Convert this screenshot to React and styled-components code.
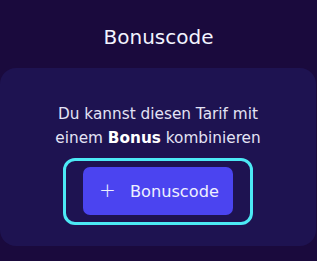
import React from "react";
import styled, { createGlobalStyle } from "styled-components";

const GlobalStyle = createGlobalStyle`
  html, body {
    margin: 0;
    padding: 0;
    background: #1a0a3d;
  }
  body {
    font-family: "DejaVu Sans", "Noto Sans", sans-serif;
  }
`;

const Page = styled.div`
  width: 317px;
  height: 261px;
  background: #1a0a3d;
  display: flex;
  flex-direction: column;
`;

const Title = styled.h2`
  margin: 0;
  height: 68px;
  display: flex;
  align-items: center;
  justify-content: center;
  padding-top: 6px;
  box-sizing: border-box;
  font-size: 20px;
  font-weight: 500;
  color: #f2f3ff;
`;

const Card = styled.div`
  width: 316px;
  height: 178px;
  box-sizing: border-box;
  background: #1e1351;
  border-radius: 16px;
  padding-top: 34px;
  display: flex;
  flex-direction: column;
  align-items: center;
`;

const Text = styled.p`
  margin: 0 0 8px;
  text-align: center;
  font-size: 15.3px;
  line-height: 24px;
  color: #e4e3f5;
  b {
    font-weight: 700;
    color: #ffffff;
  }
`;

const Ring = styled.div`
  border: 3px solid #4ce9f5;
  border-radius: 12px;
  padding: 6px 17px 7px;
`;

const Button = styled.button`
  width: 150px;
  height: 48px;
  border: none;
  border-radius: 7px;
  background: #4b44f0;
  color: #eef0ff;
  font-family: inherit;
  font-size: 16.2px;
  font-weight: 500;
  display: flex;
  align-items: center;
  justify-content: center;
  gap: 14px;
  padding: 0 0 0 2px;
  cursor: pointer;
`;

const Plus = styled.span`
  font-size: 20px;
  font-weight: 300;
  line-height: 1;
  margin-top: -2px;
`;

export default function App() {
  return (
    <Page>
      <GlobalStyle />
      <Title>Bonuscode</Title>
      <Card>
        <Text>
          Du kannst diesen Tarif mit
          <br />
          einem <b>Bonus</b> kombinieren
        </Text>
        <Ring>
          <Button>
            <Plus>+</Plus>
            Bonuscode
          </Button>
        </Ring>
      </Card>
    </Page>
  );
}
